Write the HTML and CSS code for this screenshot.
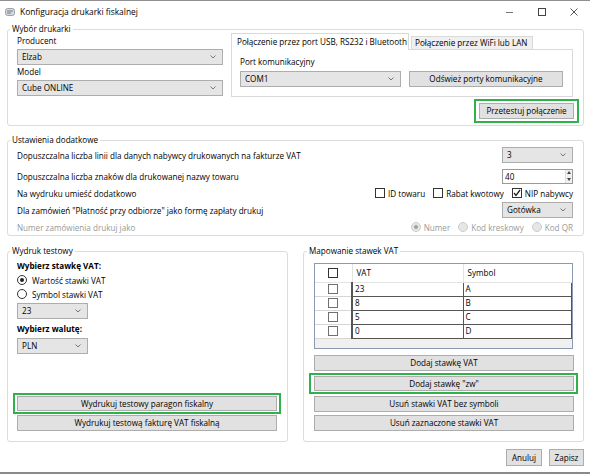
FILE: index.html
```html
<!DOCTYPE html>
<html lang="pl">
<head>
<meta charset="utf-8">
<title>Konfiguracja drukarki fiskalnej</title>
<link rel="stylesheet" href="styles.css">
</head>
<body>
<div class="window">
  <div class="titlebar">
    <span class="app-icon">
      <svg width="10" height="8" viewBox="0 0 10 8"><rect x="0.5" y="0.5" width="9" height="7" rx="2" fill="#d5d9de" stroke="#9aa3ad"/><line x1="2" y1="3" x2="8" y2="3" stroke="#6f7a86"/><line x1="2" y1="5" x2="6" y2="5" stroke="#6f7a86"/></svg>
    </span>
    <span class="title">Konfiguracja drukarki fiskalnej</span>
    <span class="controls">
      <span class="ctl"><svg width="8" height="8" viewBox="0 0 8 8"><line x1="0" y1="4.5" x2="7" y2="4.5" stroke="#777" stroke-width="1"/></svg></span>
      <span class="ctl"><svg width="8" height="8" viewBox="0 0 8 8"><rect x="0.5" y="0.5" width="7" height="7" fill="none" stroke="#444"/></svg></span>
      <span class="ctl"><svg width="8" height="8" viewBox="0 0 8 8"><path d="M0.5 0.5 L7.5 7.5 M7.5 0.5 L0.5 7.5" stroke="#555" stroke-width="1" fill="none"/></svg></span>
    </span>
  </div>

  <div class="content">
    <fieldset class="group g-printer">
      <legend>Wybór drukarki</legend>
      <div class="printer">
        <div class="printer-left">
          <div class="lbl">Producent</div>
          <div class="combo c-wide first">Elzab<svg class="chev" width="6" height="4" viewBox="0 0 6 4"><polyline points="0.5,0.5 3,3 5.5,0.5" fill="none" stroke="#777"/></svg></div>
          <div class="lbl lbl-model">Model</div>
          <div class="combo c-wide first">Cube ONLINE<svg class="chev" width="6" height="4" viewBox="0 0 6 4"><polyline points="0.5,0.5 3,3 5.5,0.5" fill="none" stroke="#777"/></svg></div>
        </div>
        <div class="printer-right">
          <div class="tabs">
            <div class="tab active">Połączenie przez port USB, RS232 i Bluetooth</div>
            <div class="tab">Połączenie przez WiFi lub LAN</div>
          </div>
          <div class="tabpanel">
            <div class="lbl">Port komunikacyjny</div>
            <div class="port-row">
              <div class="combo c-port">COM1<svg class="chev" width="6" height="4" viewBox="0 0 6 4"><polyline points="0.5,0.5 3,3 5.5,0.5" fill="none" stroke="#777"/></svg></div>
              <div class="btn b-refresh">Odśwież porty komunikacyjne</div>
            </div>
          </div>
          <div class="hl hl-test"><div class="btn b-test">Przetestuj połączenie</div></div>
        </div>
      </div>
    </fieldset>

    <fieldset class="group g-settings">
      <legend>Ustawienia dodatkowe</legend>
      <div class="srow r1">
        <span>Dopuszczalna liczba linii dla danych nabywcy drukowanych na fakturze VAT</span>
        <div class="combo c-small">3<svg class="chev" width="6" height="4" viewBox="0 0 6 4"><polyline points="0.5,0.5 3,3 5.5,0.5" fill="none" stroke="#777"/></svg></div>
      </div>
      <div class="srow r2">
        <span>Dopuszczalna liczba znaków dla drukowanej nazwy towaru</span>
        <div class="spin"><span class="spin-val">40</span><span class="spin-btns"><svg width="4" height="3" viewBox="0 0 4 3"><polygon points="0,3 2,0 4,3" fill="#444"/></svg><svg width="4" height="3" viewBox="0 0 4 3"><polygon points="0,0 4,0 2,3" fill="#444"/></svg></span></div>
      </div>
      <div class="srow r3">
        <span>Na wydruku umieść dodatkowo</span>
        <div class="checks">
          <label class="chk"><span class="cb"></span>ID towaru</label>
          <label class="chk"><span class="cb"></span>Rabat kwotowy</label>
          <label class="chk"><span class="cb on"><svg width="8" height="8" viewBox="0 0 8 8"><polyline points="1,4 3,6.5 7,1" fill="none" stroke="#222" stroke-width="1.3"/></svg></span>NIP nabywcy</label>
        </div>
      </div>
      <div class="srow r4">
        <span>Dla zamówień "Płatność przy odbiorze" jako formę zapłaty drukuj</span>
        <div class="combo c-small">Gotówka<svg class="chev" width="6" height="4" viewBox="0 0 6 4"><polyline points="0.5,0.5 3,3 5.5,0.5" fill="none" stroke="#777"/></svg></div>
      </div>
      <div class="srow r5 disabled">
        <span>Numer zamówienia drukuj jako</span>
        <div class="radios">
          <label class="rad"><span class="rb on"></span>Numer</label>
          <label class="rad"><span class="rb"></span>Kod kreskowy</label>
          <label class="rad"><span class="rb"></span>Kod QR</label>
        </div>
      </div>
    </fieldset>

    <div class="bottom">
      <fieldset class="group g-test">
        <legend>Wydruk testowy</legend>
        <div class="bold first-bold">Wybierz stawkę VAT:</div>
        <label class="rad rrow"><span class="rb on"></span>Wartość stawki VAT</label>
        <label class="rad rrow"><span class="rb"></span>Symbol stawki VAT</label>
        <div class="combo c-mini c-vat">23<svg class="chev" width="6" height="4" viewBox="0 0 6 4"><polyline points="0.5,0.5 3,3 5.5,0.5" fill="none" stroke="#777"/></svg></div>
        <div class="bold second-bold">Wybierz walutę:</div>
        <div class="combo c-mini c-cur">PLN<svg class="chev" width="6" height="4" viewBox="0 0 6 4"><polyline points="0.5,0.5 3,3 5.5,0.5" fill="none" stroke="#777"/></svg></div>
        <div class="hl hl-print"><div class="btn b-full b-thin">Wydrukuj testowy paragon fiskalny</div></div>
        <div class="btn b-full b-invoice">Wydrukuj testową fakturę VAT fiskalną</div>
      </fieldset>

      <fieldset class="group g-map">
        <legend>Mapowanie stawek VAT</legend>
        <div class="grid">
          <table>
            <thead>
              <tr><th class="c-sel"><span class="cb"></span></th><th class="c-vatcol">VAT</th><th class="c-symcol">Symbol</th></tr>
            </thead>
            <tbody>
              <tr><td class="c-sel"><span class="cb g"></span></td><td class="d1">23</td><td class="d2">A</td></tr>
              <tr><td class="c-sel"><span class="cb g"></span></td><td class="d1">8</td><td class="d2">B</td></tr>
              <tr><td class="c-sel"><span class="cb g"></span></td><td class="d1">5</td><td class="d2">C</td></tr>
              <tr><td class="c-sel"><span class="cb g"></span></td><td class="d1">0</td><td class="d2">D</td></tr>
            </tbody>
          </table>
        </div>
        <div class="btn b-full b-add">Dodaj stawkę VAT</div>
        <div class="hl hl-zw"><div class="btn b-full b-thin">Dodaj stawkę "zw"</div></div>
        <div class="btn b-full b-del1">Usuń stawki VAT bez symboli</div>
        <div class="btn b-full b-del2">Usuń zaznaczone stawki VAT</div>
      </fieldset>
    </div>

    <div class="footer">
      <div class="btn b-foot b-cancel">Anuluj</div>
      <div class="btn b-foot">Zapisz</div>
    </div>
  </div>
</div>
</body>
</html>
```

FILE: styles.css
```css
* { box-sizing: border-box; }
html, body { margin: 0; padding: 0; }
body {
  width: 590px;
  height: 474px;
  overflow: hidden;
  background: #fff;
  font-family: "Open Sans", "Noto Sans", sans-serif;
  font-size: 8.15px;
  color: #000;
}
.window {
  width: 590px;
  height: 474px;
  border-top: 1px solid #8f8f8f;
  border-bottom: 2px solid #8a8a8a;
  background: #fff;
}
.titlebar {
  height: 22px;
  display: flex;
  align-items: center;
  padding-left: 5px;
}
.app-icon { display: flex; margin-right: 5px; }
.title { font-size: 8.4px; line-height: 12px; }
.controls { margin-left: auto; display: flex; }
.ctl {
  width: 32px;
  height: 22px;
  display: flex;
  align-items: center;
  justify-content: center;
}

.content { padding: 0 6px 0 7px; }

.group {
  margin: 0;
  padding: 0 4px 0 9px;
  border: 1px solid #dcdcdc;
  border-radius: 3px;
  min-width: 0;
}
.group > legend {
  padding: 0 2px;
  margin-left: -7px;
  line-height: 12px;
  height: 12px;
}

.lbl { line-height: 12px; height: 12px; }

.combo {
  height: 16px;
  border: 1px solid #adadad;
  background: #e5e5e5;
  display: flex;
  align-items: center;
  padding-left: 4px;
  line-height: 12px;
}
.combo .chev { margin-left: auto; margin-right: 6px; }

.btn {
  height: 16px;
  border: 1px solid #adadad;
  background: #e1e1e1;
  display: flex;
  align-items: center;
  justify-content: center;
  line-height: 12px;
  white-space: nowrap;
}
.hl { border: 2px solid #2fb24c; }

/* printer selection */
.printer { display: flex; gap: 8px; padding-bottom: 2px; }
.printer-left { width: 206px; }
.c-wide.first { margin-top: 2px; }
.lbl-model { margin-top: 1px; }
.printer-right { width: 348px; margin-top: -2px; display: flex; flex-direction: column; }
.tabs { display: flex; align-items: flex-end; height: 16px; position: relative; z-index: 1; }
.tab {
  border: 1px solid #d9d9d9;
  border-bottom: none;
  line-height: 12px;
  white-space: nowrap;
}
.tab.active { width: 178px; height: 17px; background: #fff; padding: 2px 0 0 5px; margin-bottom: -1px; }
.tab:not(.active) { width: 122px; height: 13px; background: #f0f0f0; margin-left: 2px; padding-left: 3px; }
.tabpanel {
  width: 342px;
  border: 1px solid #d9d9d9;
  padding: 6px 8px 9px 8px;
}
.port-row { display: flex; gap: 8px; margin-top: 3px; }
.c-port { width: 161px; }
.b-refresh { width: 154px; }
.hl-test { align-self: flex-end; margin-top: 2px; padding: 2px 3px; }
.b-test { width: 95px; }

/* additional settings */
.g-settings { margin-top: 8px; padding: 0 10px 0 9px; }
.srow { display: flex; align-items: center; justify-content: space-between; height: 16px; }
.srow.r1 { height: 18px; }
.srow.r2 { height: 18px; margin-top: 3px; }
.srow.r4, .srow.r5 { margin-top: 1px; }
.c-small { width: 71px; }
.spin {
  width: 71px;
  height: 15px;
  border: 1px solid #9a9a9a;
  background: #fff;
  display: flex;
  align-items: center;
}
.spin-val { padding-left: 2px; flex: 1; }
.spin-btns {
  width: 7px;
  height: 13px;
  border-left: 1px solid #dcdcdc;
  display: flex;
  flex-direction: column;
  align-items: center;
  justify-content: space-around;
  background: #f0f0f0;
}
.checks, .radios { display: flex; gap: 8px; }
.chk, .rad { display: flex; align-items: center; gap: 3px; white-space: nowrap; }
.cb {
  width: 10px;
  height: 10px;
  border: 1px solid #333;
  background: #fff;
  display: flex;
  align-items: center;
  justify-content: center;
}
.rb {
  width: 10px;
  height: 10px;
  border: 1px solid #333;
  border-radius: 50%;
  background: #fff;
  display: flex;
  align-items: center;
  justify-content: center;
}
.rb.on::after {
  content: "";
  width: 4px;
  height: 4px;
  border-radius: 50%;
  background: #222;
}
.disabled { color: #9a9a9a; }
.disabled .rb { border-color: #cccccc; background: #e6e6e6; }
.disabled .rb.on::after { background: #a0a0a0; }

/* bottom groups */
.bottom { display: flex; gap: 15px; margin-top: 9px; }
.g-test, .g-map { width: 281px; padding-bottom: 10px; }
.g-map { padding-left: 10px; }
.bold { font-weight: bold; line-height: 12px; }
.first-bold { margin-top: 3px; }
.rrow { height: 14px; gap: 5px; }
.rrow:first-of-type { margin-top: 1px; }
.c-mini { width: 71px; }
.c-vat { margin-top: 2px; }
.second-bold { margin-top: 4px; }
.c-cur { margin-top: 3px; }
.hl-print { margin-top: 39px; margin-left: -4px; width: 268px; padding: 1px 2px; }
.b-full { width: 260px; }
.b-thin { height: 15px; }
.b-invoice { margin-top: 1px; }

.grid {
  width: 259px;
  height: 86px;
  margin-top: 6px;
  border: 1px solid #8c9bb3;
  background: #f0f0f0;
}
.grid table { width: 100%; border-collapse: collapse; background: #fff; }
.grid th, .grid td { padding: 0; text-align: left; font-weight: normal; line-height: 12px; }
.grid th { height: 18px; border-right: 1px solid #e3e3e3; border-bottom: 1px solid #e3e3e3; }
.grid th.c-symcol { border-right: none; }
.grid th.c-vatcol, .grid th.c-symcol { padding-left: 4px; }
.c-sel { width: 37px; }
.c-sel .cb { margin: 0 auto; }
.cb.g { border-color: #707070; }
.c-vatcol { width: 111px; }
.grid td { height: 14px; border-bottom: 1px solid #d6d6d6; }
.grid td.d1, .grid td.d2 { border-bottom: 1px solid #555; padding-left: 2px; }
.grid td.d1 { border-left: 2px solid #555; border-right: 1px solid #555; }
.grid td.d2 { border-right: 1px solid #555; }

.b-add { margin-top: 6px; }
.hl-zw { margin-top: 2px; margin-left: -5px; width: 269px; padding: 1px 3px; }
.b-del1 { margin-top: 2px; }
.b-del2 { margin-top: 3px; }

.footer { display: flex; justify-content: flex-end; gap: 7px; margin-top: 7px; }
.b-foot { height: 17px; width: 35px; }
.b-cancel { width: 36px; }
```
